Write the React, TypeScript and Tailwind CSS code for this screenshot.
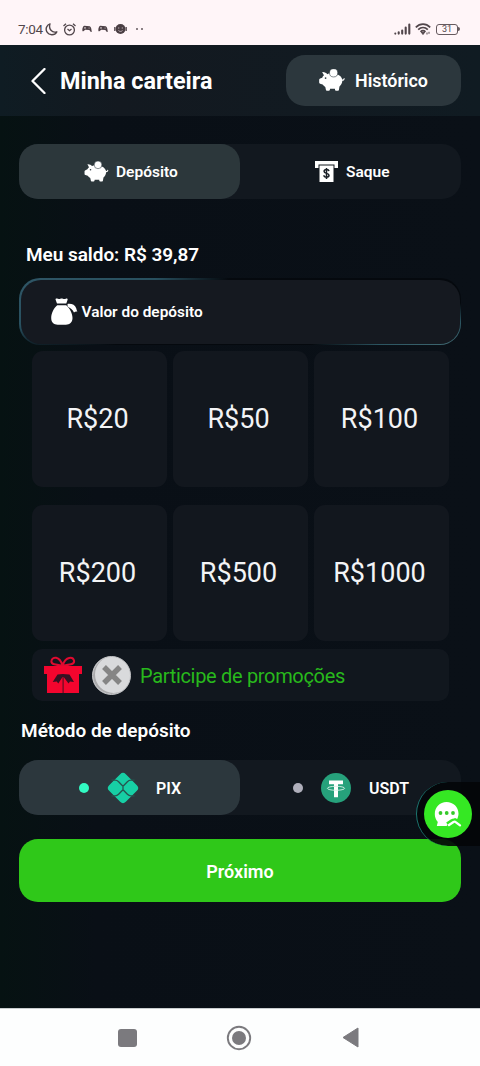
import { useState } from 'react';
import clsx from 'clsx';

const AMOUNTS = [20, 50, 100, 200, 500, 1000];

function PiggyIcon({ className }: { className?: string }) {
  return (
    <svg viewBox="0 0 28 24" className={className} fill="currentColor">
      <path d="M3.800 3.300c2.200-.3 4.200.9 5.300 2.100 1-.5 1.900-.8 2.900-1a4.700 4.700 0 0 0 8 1.400c2.500 1.100 4.200 3 4.700 5.100.8.2 1.300-.3 1.500-1.100.2-.7 1.100-.4 1 .3-.1 1.300-1 2.200-2.400 2.200-.2 2.500-1.300 4.400-3 5.900l-.6 3.700c-.1.500-.4.800-.9.800h-2.200c-.5 0-.8-.3-.9-.8l-.2-1.200h-5l-.3 1.200c-.1.500-.4.800-.9.800H8.600c-.5 0-.8-.3-.9-.8L7 18.700c-1.200-.7-2.100-1.600-2.800-2.600l-2.600-.7c-.6-.2-1-.6-1-1.200v-3c0-.6.4-1 1-1.200l2.200-1c.4-.9 1-1.700 1.800-2.400z" />
      <circle cx="15.700" cy="4" r="4.300" stroke="#2d393f" strokeWidth="0.600" />
      <circle cx="7.300" cy="9.500" r="0.900" fill="#2d393f" />
    </svg>
  );
}

function WithdrawIcon() {
  return (
    <svg viewBox="0 0 23 21" className="h-[21px] w-[23px]">
      <path d="M0 0h23v7h-3.500V3.500h-16V7H0z" fill="#fff" />
      <path d="M4.500 4.500h14V21h-14z" fill="#fff" />
      <path
        d="M14 10.200c-.2-1-1.100-1.600-2.500-1.600s-2.400.6-2.400 1.800c0 2.600 4.900 1.300 4.900 3.900 0 1.200-1 1.900-2.500 1.900S9 15.500 8.900 14.300M11.500 7v11"
        fill="none"
        stroke="#1a2027"
        strokeWidth="1.500"
      />
    </svg>
  );
}

function MoneyBagIcon() {
  return (
    <svg viewBox="0 0 27 27" className="h-[27px] w-[27px]" fill="#fff">
      <path d="M4.600 1.700C4.300.6 5.300.2 6.100.6c1.200.6 2.300.5 3.300.1 1-.3 1.800-.2 2.500.1.900.4 2 .3 2.900-.1.900-.4 2.100 0 1.800 1l-1.300 3.800H6z" />
      <path d="M6.200 7.200h9c3.500 3 6.300 7.900 6.300 12.900 0 4.400-2.900 6.700-6.600 6.700H6.700c-3.800 0-6.500-2.300-6.500-6.700 0-5 2.600-9.900 6-12.900z" />
      <path d="M16.500 6c3.800-.6 7.600.8 8.700 4.200.5 1.500.4 2.300 1.200 3.400-1.600-.3-2.500.2-3.400.9-1.300-2.700-3.600-4.600-6.400-6z" />
    </svg>
  );
}

function GiftIcon() {
  return (
    <svg viewBox="0 0 38 38" className="h-[38px] w-[38px]">
      <path
        d="M18.500 9.500C12 9 6.500 8.500 7.500 4.500c.8-3.800 8-5 11 5 3.500-10 10.500-8.600 11.500-5 1 4-5 4.500-11.500 5l-8 4m8-4 8 4"
        fill="none"
        stroke="#e00a30"
        strokeWidth="2"
      />
      <path d="M0 10h38v8H0zM3 17.500h32V37H3z" fill="#f3052e" />
      <path d="M18.300 18h1.700v19h-1.700z" fill="#8d0b25" />
      <path d="m18.500 18-5 .5-4.800 7.500 4-.5 1.600 2 4.200-6.500h1.200l4.800 6.500 1.500-2 4 .5-4.500-7.500z" fill="#351223" />
    </svg>
  );
}

function PixIcon() {
  return (
    <svg viewBox="0 0 32 32" className="h-8 w-8">
      <rect x="4.200" y="4.200" width="23.600" height="23.600" rx="4" transform="rotate(45 16 16)" fill="#17cfa5" />
      <path
        d="M4.500 7.700h3.600c1.500 0 2.500.5 3.500 1.500l8.800 13.600M4.500 7.700"
        fill="none"
      />
      <path
        d="M4.500 8.200h3.600c1.500 0 2.500.5 3.500 1.500L16 14.200l4.400-4.500c1-1 2-1.500 3.500-1.500h3.600M4.500 23.800h3.600c1.500 0 2.500-.5 3.500-1.500l4.400-4.500 4.400 4.500c1 1 2 1.500 3.500 1.500h3.600M16 14v4"
        fill="none"
        stroke="#27544f"
        strokeWidth="1.300"
      />
    </svg>
  );
}

function TetherIcon() {
  return (
    <svg viewBox="0 0 30 30" className="h-[30px] w-[30px]">
      <circle cx="15" cy="15" r="15" fill="#26a17b" />
      <path d="M8 7.500h14v3.800h-5v12.900h-4V11.300H8z" fill="#fff" />
      <ellipse cx="15" cy="15.300" rx="8.600" ry="2" fill="none" stroke="#d9f2e9" strokeWidth="0.900" />
    </svg>
  );
}

function ChatIcon() {
  return (
    <svg viewBox="0 0 28 26" className="mt-0.5 h-[26px] w-[28px]">
      <path d="M12.500 0C19.300 0 24.500 5 24.500 11.500c0 2-.5 3.800-1.300 5.500L21 16l-8.500 8H2.800l1-4C1.800 17.800.8 15 .8 12 .8 5 5.800 0 12.500 0z" fill="#fff" />
      <g fill="#35c92a">
        <circle cx="6.500" cy="11" r="1.900" />
        <circle cx="12.700" cy="11" r="1.900" />
        <circle cx="19" cy="11" r="1.900" />
      </g>
      <path d="m13.500 22.500 4.500-2.800c1.500-.9 3-.9 4.300.3l3.500 2.800" fill="none" stroke="#35e823" strokeWidth="5" />
      <path d="m15 23 4.500-3c.8-.5 1.500-.5 2.200.1l4.300 3.200" fill="none" stroke="#fff" strokeWidth="2.300" strokeLinecap="round" />
    </svg>
  );
}

function GamepadIcon() {
  return (
    <svg viewBox="0 0 11 8" className="h-2 w-2.5">
      <path d="M2.500.5 8.500 1c1.500.5 2 3.500 2.200 6-1 .8-2-.8-2.600-1.800L3.500 4.700C2.500 5.500 1.500 7 .6 6.500 0 4.500.8 1 2.500.5z" fill="#4d4046" />
      <path d="M2.300 2.800h2M3.300 1.800v2M7.200 3h1.300" stroke="#e9dce1" strokeWidth=".7" />
    </svg>
  );
}

function StatusBar() {
  return (
    <div className="flex h-[45px] items-start justify-between bg-[#fff5f8] pt-5 pr-5 pl-[18px] text-[#51464b]">
      <div className="flex h-[18px] items-center">
        <span className="w-[27px] text-[13.5px] leading-[18px] tracking-[-0.3px]">7:04</span>
        <svg viewBox="0 0 13 13" className="h-[13px] w-[13px]">
          <path d="M5 .9C1.500 2 .2 6.200 2 9c2.200 3.700 7.700 3.600 9.800-.2C7 10.300 3.300 6 5 .9z" fill="none" stroke="currentColor" strokeWidth="1.400" strokeLinejoin="round" />
        </svg>
        <svg viewBox="0 0 13 13" className="ml-[5px] h-[13px] w-[13px]" fill="none" stroke="currentColor" strokeWidth="1.300">
          <circle cx="6.500" cy="7" r="4.900" />
          <path d="M.5 3 3 .8M12.500 3 10 .8M4.500 6l2 1.700 2-1.700" />
        </svg>
        <span className="ml-1.5 flex gap-1.5">
          <GamepadIcon />
          <GamepadIcon />
        </span>
        <svg viewBox="0 0 13 12" className="ml-1.5 h-3 w-[13px]">
          <circle cx="6.500" cy="6" r="5" fill="#4a3e43" />
          <path d="M.8 4v4M12.200 4v4" stroke="#4a3e43" strokeWidth="1.200" />
          <path d="M4 5h1.300M7.700 5H9M4.500 7.500c1 1.200 3 1.200 4 0" fill="none" stroke="#d8cbd0" strokeWidth=".8" />
        </svg>
        <span className="ml-[9px] flex gap-[3px]">
          <i className="h-0.5 w-0.5 rounded-full bg-[#65595f]" />
          <i className="h-0.5 w-0.5 rounded-full bg-[#65595f]" />
        </span>
      </div>
      <div className="flex h-[18px] items-center">
        <svg viewBox="0 0 17 12" className="h-3 w-[17px]" stroke="currentColor" strokeWidth="2.100" strokeLinecap="round">
          <path d="M1.300 10.500v.1M4.700 9.300v1.300M8.200 7.500v3.100M11.700 4.500v6.100M15.300 1.500v9.100" />
        </svg>
        <svg viewBox="0 0 16 12" className="ml-1 h-3 w-4" fill="none" stroke="currentColor" strokeWidth="1.700">
          <path d="M.8 4.300c4.300-4.200 10.100-4.200 14.400 0M3.200 6.600c2.800-2.700 6.800-2.700 9.600 0M5.500 8.800c1.500-1.400 3.500-1.400 5 0" />
          <path d="M6.300 9.300h3.400L8 11.500zM12 9.500v2M14 8.800v2" fill="currentColor" strokeWidth="1" />
        </svg>
        <div className="ml-[5px] flex h-[11px] w-[22px] items-center justify-center rounded-[3px] border border-[#65595e] pt-px text-[9px] leading-none">
          31
        </div>
        <i className="h-1 w-0.5 rounded-r bg-[#65595e]" />
      </div>
    </div>
  );
}

export default function App() {
  const [tab, setTab] = useState<'deposit' | 'withdraw'>('deposit');
  const [method, setMethod] = useState<'pix' | 'usdt'>('pix');

  return (
    <div className="relative flex h-[1066px] w-[480px] flex-col overflow-hidden bg-[#0a1017] font-['Roboto',sans-serif] text-white">
      <StatusBar />

      <header className="flex h-[71px] items-center bg-linear-to-r from-[#0f1c23] via-[#131920] via-25% to-[#101b22] pr-[19px] pl-[31px]">
        <svg viewBox="0 0 15 26" className="h-[26px] w-[15px]">
          <path d="M13.500 1 1.500 13l12 12" fill="none" stroke="#fff" strokeWidth="2.300" strokeLinecap="round" strokeLinejoin="round" />
        </svg>
        <h1 className="ml-[14px] pt-px text-[23.4px] leading-7 font-bold">Minha carteira</h1>
        <button className="ml-auto flex h-[51px] w-[175px] items-center rounded-[19px] bg-[#2c373d] pl-8">
          <PiggyIcon className="h-[23px] w-[28px]" />
          <span className="ml-[9px] pt-0.5 text-[17.9px] font-semibold">Histórico</span>
        </button>
      </header>

      <main className="flex h-[892px] flex-col bg-linear-to-r from-[#061212] via-[#090f16] via-20% to-[#0a1017] px-[19px] pt-7">
        <div className="flex h-[55px] shrink-0 rounded-[19px] bg-[#12181f] text-[15.5px] font-semibold">
          <button
            onClick={() => setTab('deposit')}
            className={clsx('flex w-[221px] items-center rounded-[19px] pl-[65px]', tab === 'deposit' && 'bg-[#2c373b]')}
          >
            <PiggyIcon className="h-[22px] w-[25px]" />
            <span className="ml-[7px] pt-0.5">Depósito</span>
          </button>
          <button
            onClick={() => setTab('withdraw')}
            className={clsx('flex w-[221px] items-center rounded-[19px] pl-[75px]', tab === 'withdraw' && 'bg-[#2c373b]')}
          >
            <WithdrawIcon />
            <span className="ml-2 pt-0.5">Saque</span>
          </button>
        </div>

        <p className="mt-[43px] ml-[7px] text-[19px] leading-[26px] font-semibold tracking-[-0.05px]">Meu saldo: R$ 39,87</p>

        <div className="mt-[10px] h-[67px] shrink-0 rounded-[21px] bg-[radial-gradient(ellipse_210px_75px_at_0_0,#2f5666_0%,#28505f_65%,transparent_100%),radial-gradient(ellipse_150px_42px_at_100%_100%,#416a73_0%,#2b5460_55%,transparent_100%),linear-gradient(#05090e,#05090e)] p-[1.5px]">
          <div className="flex h-full items-center rounded-[20px] bg-[#151920] pl-[30px]">
            <MoneyBagIcon />
            <span className="ml-1 pt-0.5 text-[15.4px] font-semibold">Valor do depósito</span>
          </div>
        </div>

        <div className="mt-1.5 grid shrink-0 grid-cols-3 gap-x-1.5 gap-y-[18px] pr-3 pl-[13px]">
          {AMOUNTS.map((amount) => (
            <button key={amount} className="h-[136px] rounded-[11px] bg-[#12171e] pr-1 text-[27px] text-[#f3f4f6]">
              R${amount}
            </button>
          ))}
        </div>

        <div className="mt-2 mr-3 ml-[13px] flex h-[52px] shrink-0 items-center rounded-[10px] bg-[#11171e] pl-3">
          <GiftIcon />
          <div className="ml-[10px] flex h-[39px] w-[39px] items-center justify-center rounded-full border border-[#c2c3c5] bg-[#d9dadc] shadow-[inset_2px_-1px_0_#aaaaac]">
            <svg viewBox="0 0 20 20" className="h-5 w-5">
              <path d="m2 2 16 16M18 2 2 18" stroke="#858585" strokeWidth="5.400" />
            </svg>
          </div>
          <span className="ml-[9px] pt-0.5 text-[20px] tracking-[-0.32px] text-[#28b91c]">Participe de promoções</span>
        </div>

        <h2 className="mt-[17px] ml-0.5 text-[19px] leading-[26px] font-semibold">Método de depósito</h2>

        <div className="mt-4 flex h-[55px] shrink-0 rounded-[19px] bg-[#12181f] text-[16px] font-semibold">
          <button
            onClick={() => setMethod('pix')}
            className={clsx('flex w-[221px] items-center rounded-[19px] pl-[60px]', method === 'pix' && 'bg-[#2c373d]')}
          >
            <i className={clsx('h-[10px] w-[10px] rounded-full', method === 'pix' ? 'bg-[#32fac3]' : 'bg-[#afafbb]')} />
            <span className="ml-[18px]">
              <PixIcon />
            </span>
            <span className="ml-[17px] pt-0.5">PIX</span>
          </button>
          <button
            onClick={() => setMethod('usdt')}
            className={clsx('flex w-[221px] items-center rounded-[19px] pl-[53px]', method === 'usdt' && 'bg-[#2c373d]')}
          >
            <i className={clsx('h-[10px] w-[10px] rounded-full', method === 'usdt' ? 'bg-[#32fac3]' : 'bg-[#afafbb]')} />
            <span className="ml-[18px]">
              <TetherIcon />
            </span>
            <span className="ml-[18px] pt-0.5">USDT</span>
          </button>
        </div>

        <button className="mt-6 h-[63px] shrink-0 rounded-[19px] bg-[#2fc819] pt-0.5 text-[18px] font-semibold">Próximo</button>
      </main>

      {/* support chat bubble, docked to the right edge */}
      <div className="absolute top-[782px] right-0 flex h-16 w-16 items-center rounded-l-full border-l-[1.5px] border-[#1c7771] bg-[#030608]/90 pl-[7px]">
        <button className="flex h-12 w-12 items-center justify-center rounded-full bg-[#35e823]">
          <ChatIcon />
        </button>
      </div>

      <nav className="flex h-[58px] items-center border-t border-[#c9cdcf] bg-[#fdfefe] pl-[118px] text-[#7b7a7e]">
        <i className="h-[18px] w-[19px] rounded-[3px] bg-[#7b7a7e]" />
        <svg viewBox="0 0 26 26" className="ml-[89px] h-[26px] w-[26px]">
          <circle cx="13" cy="13" r="11.200" fill="none" stroke="currentColor" strokeWidth="1.900" />
          <circle cx="13" cy="13" r="7" fill="currentColor" />
        </svg>
        <svg viewBox="0 0 17 21" className="ml-[90px] h-[21px] w-[17px]">
          <path d="M16 1v19L1 10.500z" fill="currentColor" stroke="currentColor" strokeLinejoin="round" />
        </svg>
      </nav>
    </div>
  );
}
